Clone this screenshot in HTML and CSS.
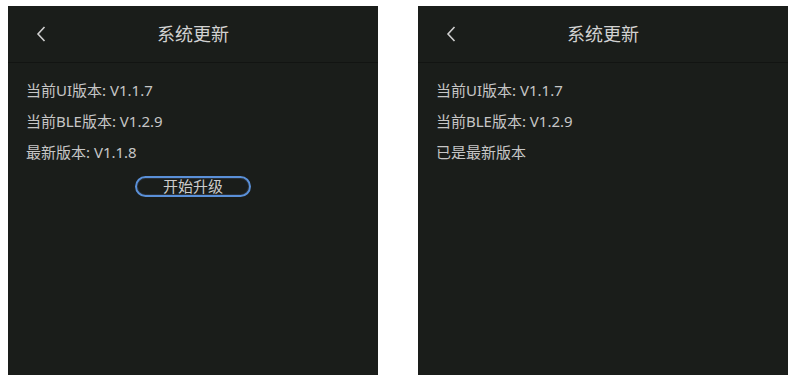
FILE: index.html
```html
<!DOCTYPE html>
<html lang="zh">
<head>
<meta charset="utf-8">
<link rel="stylesheet" href="styles.css">
</head>
<body>
<div class="screens">
  <section class="panel">
    <header class="header">
      <svg class="back" width="10" height="16" viewBox="0 0 10 16"><path d="M8.5 1 L2 8 L8.5 15" fill="none" stroke="#cfcfcf" stroke-width="1.6"/></svg>
      <h1 class="title">系统更新</h1>
    </header>
    <div class="content">
      <p class="line">当前UI版本: V1.1.7</p>
      <p class="line">当前BLE版本: V1.2.9</p>
      <p class="line">最新版本: V1.1.8</p>
      <div class="btn-row"><button class="btn">开始升级</button></div>
    </div>
  </section>
  <section class="panel">
    <header class="header">
      <svg class="back" width="10" height="16" viewBox="0 0 10 16"><path d="M8.5 1 L2 8 L8.5 15" fill="none" stroke="#cfcfcf" stroke-width="1.6"/></svg>
      <h1 class="title">系统更新</h1>
    </header>
    <div class="content">
      <p class="line">当前UI版本: V1.1.7</p>
      <p class="line">当前BLE版本: V1.2.9</p>
      <p class="line">已是最新版本</p>
    </div>
  </section>
</div>
</body>
</html>
```

FILE: styles.css
```css
* { box-sizing: border-box; }
html, body { margin: 0; padding: 0; background: #ffffff; }
body {
  padding: 6px 0 0 8px;
  font-family: "Noto Sans", "Noto Sans CJK SC", sans-serif;
}
.screens {
  display: flex;
  gap: 40px;
}
.panel {
  width: 370px;
  height: 369px;
  background: #1a1d1a;
  display: flex;
  flex-direction: column;
}
.header {
  position: relative;
  height: 57px;
  border-bottom: 1px solid #121412;
  display: flex;
  align-items: center;
  justify-content: center;
}
.back {
  position: absolute;
  left: 28px;
  top: 20px;
}
.title {
  margin: 0;
  font-size: 18px;
  font-weight: 400;
  color: #d2d2d2;
  line-height: 24px;
  margin-top: -1px;
}
.content {
  padding: 12px 0 0 18px;
}
.line {
  margin: 0;
  font-size: 15px;
  line-height: 31px;
  color: #c6c6c6;
}
.btn-row {
  display: flex;
  justify-content: center;
  padding-right: 18px;
  margin-top: 8px;
}
.btn {
  width: 116px;
  height: 21px;
  border-radius: 11px;
  border: 2px solid #5a90d8;
  box-shadow: inset 0 0 0 1px #2a3038;
  background: #1a1d1a;
  color: #cccccc;
  font-family: "Noto Sans", "Noto Sans CJK SC", sans-serif;
  font-size: 15px;
  line-height: 17px;
  padding: 0;
}
```
